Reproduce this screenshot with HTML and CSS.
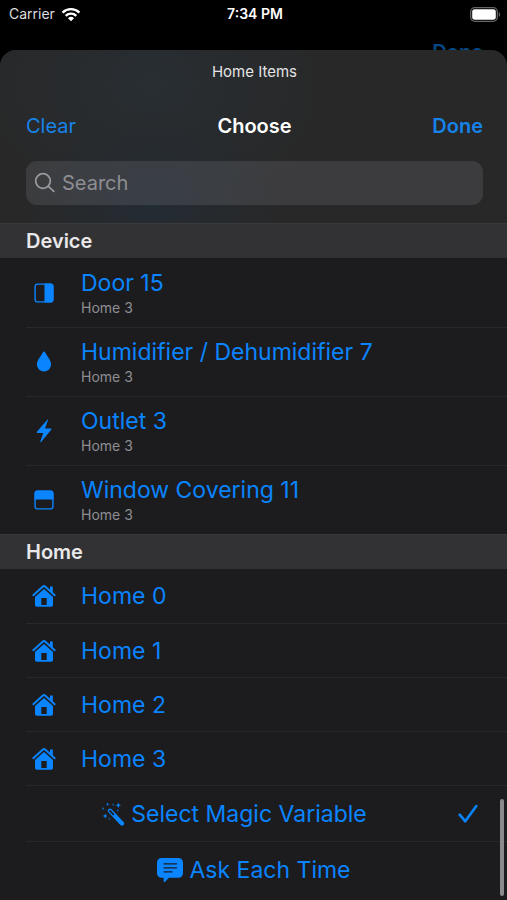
FILE: index.html
```html
<!DOCTYPE html>
<html lang="en">
<head>
<meta charset="utf-8">
<meta name="viewport" content="width=device-width, initial-scale=1">
<title>Home Items</title>
<link rel="stylesheet" href="styles.css">
</head>
<body>
<svg class="defs" width="0" height="0" aria-hidden="true">
  <symbol id="house" viewBox="0 0 24 24">
    <path d="M1.3 11.2 L10.9 2.600 Q12 1.700 13.100 2.600 L22.700 11.200" fill="none" stroke="currentColor" stroke-width="2" stroke-linecap="round" stroke-linejoin="round"/>
    <path d="M18 2.600h2.800v6.400l-2.800-2.400z" fill="currentColor"/>
    <path fill="currentColor" fill-rule="evenodd" d="M12 4.900l9 8.100v8a1.800 1.800 0 0 1-1.800 1.800H4.800A1.800 1.800 0 0 1 3 21v-8zM9.300 14v7h5.400v-7z"/>
  </symbol>
</svg>

<header class="status">
  <div class="carrier">
    <span>Carrier</span>
    <svg width="20" height="15" viewBox="0 0 20 15" aria-hidden="true">
      <g fill="none" stroke="#fff" stroke-width="2.4">
        <path d="M1.6 5.6a12 12 0 0 1 16.8 0"/>
        <path d="M4.7 8.8a7.6 7.6 0 0 1 10.6 0"/>
      </g>
      <path d="M10 14.2l-3-3a4.4 4.4 0 0 1 6 0z" fill="#fff"/>
    </svg>
  </div>
  <time>7:34 PM</time>
  <svg class="battery" width="31" height="15" viewBox="0 0 31 15" aria-hidden="true">
    <rect x=".7" y=".7" width="26.6" height="13.6" rx="4" fill="none" stroke="#666" stroke-width="1.3"/>
    <rect x="2.2" y="2.2" width="23.6" height="10.6" rx="2.4" fill="#fff"/>
    <path d="M28.8 5v5a3 3 0 0 0 0-5z" fill="#666"/>
  </svg>
</header>
<div class="behind" aria-hidden="true">Done</div>

<main class="sheet">
  <div class="top">
    <p class="caption">Home Items</p>
    <nav class="bar">
      <button class="link" type="button">Clear</button>
      <h1>Choose</h1>
      <button class="link strong" type="button">Done</button>
    </nav>
    <label class="search">
      <svg width="22" height="22" viewBox="0 0 22 22" aria-hidden="true">
        <g fill="none" stroke="#98989d" stroke-width="1.8" stroke-linecap="round">
          <circle cx="9" cy="9" r="7.3"/><path d="M14.4 14.4l5.4 5"/>
        </g>
      </svg>
      <input type="search" placeholder="Search" aria-label="Search">
    </label>
  </div>

  <section>
    <h2>Device</h2>
    <ul>
      <li><button class="row tall" type="button">
        <svg width="24" height="24" viewBox="0 0 24 24" aria-hidden="true"><rect x="3.1" y="3.1" width="17.8" height="17.8" rx="2.4" fill="none" stroke="currentColor" stroke-width="1.4"/><path d="M12.5 2.6h6.1a2.8 2.8 0 0 1 2.8 2.8v13.2a2.8 2.8 0 0 1-2.8 2.8h-6.1z" fill="currentColor"/></svg>
        <span class="text"><span class="name">Door 15</span><small>Home 3</small></span>
      </button></li>
      <li><button class="row tall" type="button">
        <svg width="24" height="24" viewBox="0 0 24 24" aria-hidden="true"><path d="M12 1.4c.6 0 .9.4 1.2 1 1.700 3.600 5.900 7.500 5.900 12a7.100 7.100 0 0 1-14.200 0c0-4.500 4.200-8.400 5.900-12 .3-.6.6-1 1.200-1z" fill="currentColor"/></svg>
        <span class="text"><span class="name">Humidifier / Dehumidifier 7</span><small>Home 3</small></span>
      </button></li>
      <li><button class="row tall" type="button">
        <svg width="24" height="24" viewBox="0 0 24 24" aria-hidden="true"><path d="M15.300.7c.4-.4.9-.1.7.4l-3 8.500h5.700c.7 0 .9.6.5 1.100L9.100 23c-.4.500-1 .200-.8-.4l3-8.700H5.400c-.7 0-.9-.6-.5-1.100z" fill="currentColor"/></svg>
        <span class="text"><span class="name">Outlet 3</span><small>Home 3</small></span>
      </button></li>
      <li><button class="row tall" type="button">
        <svg width="24" height="24" viewBox="0 0 24 24" aria-hidden="true"><rect x="3.1" y="3.1" width="17.8" height="17.8" rx="2.4" fill="none" stroke="currentColor" stroke-width="1.4"/><path d="M2.600 11.500V5.400a2.800 2.800 0 0 1 2.800-2.800h13.200a2.800 2.800 0 0 1 2.800 2.800v6.100z" fill="currentColor"/></svg>
        <span class="text"><span class="name">Window Covering 11</span><small>Home 3</small></span>
      </button></li>
    </ul>
  </section>

  <section>
    <h2>Home</h2>
    <ul>
      <li><button class="row" type="button"><svg width="24" height="24" aria-hidden="true"><use href="#house"/></svg><span class="name">Home 0</span></button></li>
      <li><button class="row" type="button"><svg width="24" height="24" aria-hidden="true"><use href="#house"/></svg><span class="name">Home 1</span></button></li>
      <li><button class="row" type="button"><svg width="24" height="24" aria-hidden="true"><use href="#house"/></svg><span class="name">Home 2</span></button></li>
      <li><button class="row" type="button"><svg width="24" height="24" aria-hidden="true"><use href="#house"/></svg><span class="name">Home 3</span></button></li>
      <li><button class="row action selected" type="button">
        <svg width="26" height="26" viewBox="0 0 26 26" aria-hidden="true">
          <path d="M10 9.800l12 12.700" stroke="currentColor" stroke-width="4.400" stroke-linecap="round"/>
          <path d="M10 9.800l3.400 3.600" stroke="#1c1c1e" stroke-width="1.800" stroke-linecap="round"/>
          <g fill="currentColor">
            <path d="M18.300 1.500l.8 2.100 2 .7-2 .8-.8 2.100-.7-2.100-2.100-.8 2.100-.7z"/>
            <path d="M5.200 12.600l.7 1.700 1.700.7-1.700.7-.7 1.700-.7-1.700-1.700-.7 1.700-.7z"/>
            <path d="M7.600 1.600l.5 1.200 1.200.5-1.200.5-.5 1.200-.5-1.200-1.200-.5 1.200-.5z"/>
          </g>
          <g fill="currentColor" opacity=".65">
            <circle cx="3" cy="7.600" r="1.100"/><circle cx="13.200" cy="3.700" r=".9"/>
            <circle cx="17.700" cy="9.500" r=".9"/><circle cx="9.400" cy="17.800" r=".9"/>
          </g>
        </svg>
        <span class="name">Select Magic Variable</span>
        <svg class="check" width="20" height="20" viewBox="0 0 20 20" role="img" aria-label="Selected"><path d="M1.700 10.700l5.600 6.600L18.300 2" fill="none" stroke="currentColor" stroke-width="2.600" stroke-linecap="round" stroke-linejoin="round"/></svg>
      </button></li>
      <li><button class="row action" type="button">
        <svg width="28" height="26" viewBox="0 0 28 26" aria-hidden="true">
          <path d="M5.500 1h17a4.500 4.500 0 0 1 4.500 4.500v10.800a4.500 4.500 0 0 1-4.500 4.500H13l-3.900 3.900c-.7.700-1.500.4-1.500-.5v-3.400H5.500A4.500 4.500 0 0 1 1 16.300V5.500A4.500 4.500 0 0 1 5.500 1z" fill="currentColor"/>
          <path d="M8 6.800h12.500M8 10.800h12.500M8 14.800h8" stroke="#1c1c1e" stroke-width="1.300" stroke-linecap="round"/>
        </svg>
        <span class="name">Ask Each Time</span>
      </button></li>
    </ul>
  </section>
  <div class="thumb"></div>
</main>
</body>
</html>
```
FILE: styles.css
```css
:root {
  --blue: #0a84ff;
  --surface: #1c1c1e;
  --edge: 26px;
}

* { box-sizing: border-box; }

body {
  margin: 0;
  background: #000;
  color: #fff;
  font-family: Inter, "Liberation Sans", sans-serif;
}

h1, h2, p, ul { margin: 0; padding: 0; }
ul { list-style: none; }
svg { flex: none; display: block; }
.defs { position: absolute; }

button {
  border: 0;
  padding: 0;
  background: none;
  color: var(--blue);
  font: inherit;
  cursor: pointer;
}

.status {
  display: grid;
  grid-template-columns: 1fr auto 1fr;
  align-items: center;
  height: 28px;
  padding: 0 6px 0 9px;
  font-size: 14px;
  line-height: 20px;
}

.carrier { display: flex; align-items: center; gap: 6px; color: #ddd; }
.status time { font-weight: 600; }
.battery { justify-self: end; }

.behind {
  height: 22px;
  padding: 0 24px;
  overflow: hidden;
  color: #064887;
  font-size: 20px;
  font-weight: 600;
  line-height: 48px;
  text-align: right;
}

.sheet {
  position: relative;
  overflow: hidden;
  min-height: calc(100vh - 50px);
  border-radius: 16px 16px 0 0;
  background: var(--surface);
}

.top {
  padding: 10px 24px 18px var(--edge);
  background:
    radial-gradient(ellipse 130px 90px at 30% 90%, #242c34, transparent),
    radial-gradient(ellipse 180px 130px at 30% 20%, #282e33, transparent),
    #282828;
}

.caption {
  color: #e4e4e6;
  font-size: 15px;
  line-height: 24px;
  text-align: center;
}

.bar {
  display: grid;
  grid-template-columns: 1fr auto 1fr;
  align-items: center;
  height: 48px;
  margin: 18px 0 11px;
  font-size: 20px;
}

.bar h1 { font-size: 20px; font-weight: 600; }
.link { justify-self: start; color: #1683ea; }
.strong { justify-self: end; font-weight: 600; }

.search {
  display: flex;
  align-items: center;
  gap: 6px;
  height: 44px;
  padding: 0 8px;
  border-radius: 11px;
  background: rgba(118, 118, 128, 0.26);
}

.search input {
  flex: 1;
  min-width: 0;
  padding: 0;
  border: 0;
  outline: 0;
  background: none;
  color: #fff;
  font: inherit;
  font-size: 20px;
}

.search input::placeholder { color: #8e8e93; opacity: 1; }

h2 {
  height: 35px;
  padding-left: var(--edge);
  border-top: 1px solid #3a3a3c;
  background: #323234;
  color: #e8e8ea;
  font-size: 20px;
  font-weight: 600;
  line-height: 34px;
}

li { padding-left: var(--edge); }
li + li .row { border-top: 1px solid #28282a; }

.row {
  display: flex;
  align-items: center;
  gap: 25px;
  width: 100%;
  height: 54px;
  padding-left: 6px;
  text-align: left;
}

.tall { height: 69px; }
.text { display: flex; flex-direction: column; }
.name { font-size: 23px; line-height: 30px; }

small {
  color: #8e8e93;
  font-size: 14px;
  line-height: 20px;
}

.action {
  position: relative;
  justify-content: center;
  gap: 5px;
  height: 56px;
  padding: 0 26px 0 0;
}

/* leaves room for the tick at the right edge */
.selected { padding-right: 66px; }

.check {
  position: absolute;
  right: 29px;
}

.thumb {
  position: absolute;
  right: 3px;
  bottom: 4px;
  width: 4px;
  height: 97px;
  border-radius: 2px;
  background: #8a8a8c;
}
```
